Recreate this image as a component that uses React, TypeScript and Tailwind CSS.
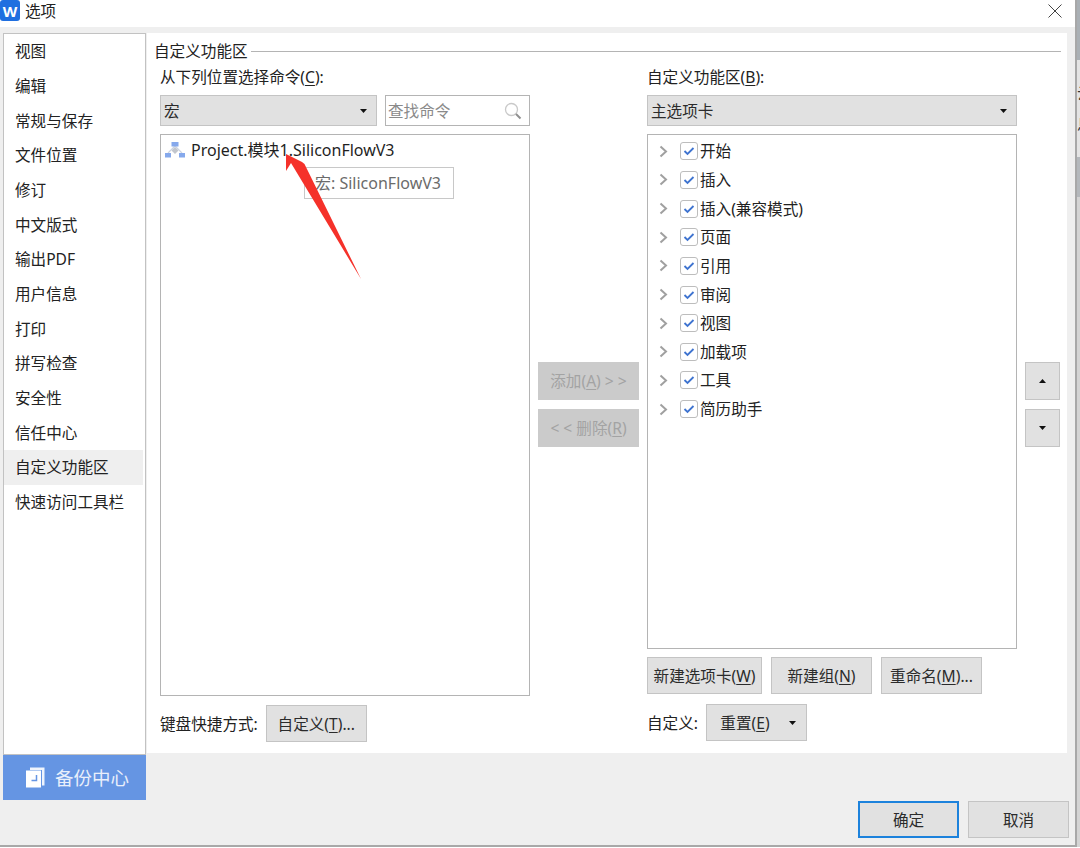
const FONT = "font-['Noto_Sans','Noto_Sans_CJK_SC',sans-serif]";

const navItems = [
  "视图",
  "编辑",
  "常规与保存",
  "文件位置",
  "修订",
  "中文版式",
  "输出PDF",
  "用户信息",
  "打印",
  "拼写检查",
  "安全性",
  "信任中心",
  "自定义功能区",
  "快速访问工具栏",
];

const tabs = ["开始", "插入", "插入(兼容模式)", "页面", "引用", "审阅", "视图", "加载项", "工具", "简历助手"];

// bits of the document behind the dialog, only their tops show under it
const behind = [
  { text: "脚本引", left: "w-[62px]" },
  { text: "引", left: "w-[63px]" },
  { text: "工", left: "w-[57px]" },
  { text: "脚本", left: "w-[530px]" },
  { text: "详", left: "w-[50px]" },
  { text: "标", left: "w-[50px]" },
  { text: "理", left: "w-[40px]" },
  { text: "析", left: "w-[40px]" },
  { text: "册", left: "w-[48px]" },
  { text: "符", left: "w-[68px]" },
  { text: "共", left: "w-[40px]" },
  { text: "符", left: "w-[30px]" },
];

function Caret({ up = false }: { up?: boolean }) {
  return (
    <svg width="7" height="4" viewBox="0 0 7 4" className="shrink-0">
      <path d={up ? "M0 4L3.500 0L7 4z" : "M0 0H7L3.500 4z"} fill="#111" />
    </svg>
  );
}

function Btn({ children, className = "" }: { children: React.ReactNode; className?: string }) {
  return (
    <div className={`flex items-center justify-center bg-[#e1e1e1] text-[#2b2b2b] whitespace-nowrap ${className}`}>
      {children}
    </div>
  );
}

function Key({ k }: { k: string }) {
  return (
    <>
      (<span className="underline underline-offset-2">{k}</span>)
    </>
  );
}

function Combo({ text }: { text: string }) {
  return (
    <div className="flex items-center justify-between h-[31px] bg-[#e1e1e1] border border-[#c4c4c4] pl-[3px] pr-[9px] text-[#2b2b2b]">
      <span>{text}</span>
      <Caret />
    </div>
  );
}

function MacroIcon() {
  return (
    <svg width="20" height="16" viewBox="0 0 20 16" className="shrink-0">
      <path d="M10 4L3 11M10 4L17 11" stroke="#ccd3e0" strokeWidth="1.200" fill="none" />
      <path d="M10 5l3.500 3.500L10 12 6.500 8.500z" fill="#c2c6cd" />
      <rect x="6.500" y="0" width="7" height="4.500" fill="#86a9ec" />
      <rect x="0" y="11" width="6" height="4.500" fill="#86a9ec" />
      <rect x="14" y="11" width="6" height="4.500" fill="#86a9ec" />
    </svg>
  );
}

export default function App() {
  return (
    <div className={`relative flex flex-col w-[1080px] h-[848px] overflow-hidden bg-white ${FONT} text-[15.6px] leading-5 text-[#222]`}>
      <div className="flex shrink-0 h-[847px]">
        {/* Dialog window */}
        <div className="flex flex-col shrink-0 w-[1077px] h-[847px] bg-[#efefef] border-r-2 border-b-2 border-[#a8a8a8]">
          {/* Title bar */}
          <div className="flex items-center h-[27px] bg-white shrink-0">
            <div className="flex items-center justify-center w-[20px] h-[21px] -mt-[6px] rounded-[3px] bg-[#1f6fe0] text-white font-bold text-[15px]">
              W
            </div>
            <span className="ml-[5px] -mt-[6px]">选项</span>
            <svg width="14" height="14" viewBox="0 0 14 14" className="ml-auto mr-[13px] -mt-[5px]">
              <path d="M0.500 0.500L13.500 13.500M13.500 0.500L0.500 13.500" stroke="#444" strokeWidth="1" />
            </svg>
          </div>

          <div className="flex pl-[3px] pt-[6px]">
            {/* Sidebar */}
            <aside className="flex flex-col w-[143px] h-[767px] shrink-0 border-l border-r border-t border-[#c2c2c2]">
              <nav className="flex-1 flex flex-col bg-white">
                {navItems.map((item) => (
                  <div
                    key={item}
                    className={`flex items-center h-[34.67px] pl-[11px] mr-[2px] ${item === "自定义功能区" ? "bg-[#efefef]" : ""}`}
                  >
                    {item}
                  </div>
                ))}
              </nav>
              <div className="flex items-center h-[46px] -mx-px pl-[23px] gap-[10px] bg-[#6595e3] border-t border-[#c2c2c2] text-[#e9effb] text-[18.500px]">
                <svg width="19" height="21" viewBox="0 0 19 21">
                  <path d="M4 0.500H18.500V18.500H16V3H4z" fill="#fff" opacity="0.9" />
                  <path d="M0 3.500H15V20.500H0z" fill="#fff" />
                  <path d="M10.500 8V13.500H5.500" stroke="#6595e3" strokeWidth="1.500" fill="none" />
                </svg>
                备份中心
              </div>
            </aside>

            <div className="flex flex-col w-[922px] ml-[1px]">
              {/* Main panel */}
              <main className="w-[920px] h-[720px] bg-white pt-[8px] shrink-0">
                <div className="flex items-center h-[20px] pl-[7px] pr-[6px]">
                  <span>自定义功能区</span>
                  <div className="flex-1 h-px ml-[3px] bg-[#b4b4b4]" />
                </div>

                <div className="flex mt-[6px] pl-[13px] gap-[8px]">
                  {/* Left column */}
                  <div className="flex flex-col w-[370px]">
                    <div className="h-[20px] mb-[8px]">
                      从下列位置选择命令<Key k="C" />:
                    </div>
                    <div className="flex gap-[8px] mb-[8px]">
                      <div className="w-[217px]">
                        <Combo text="宏" />
                      </div>
                      <div className="flex items-center justify-between flex-1 h-[31px] border border-[#b4b4b4] pl-[2px] pr-[7px] text-[#8a8a8a]">
                        <span>查找命令</span>
                        <svg width="18" height="18" viewBox="0 0 18 18">
                          <circle cx="7.500" cy="7.500" r="6" stroke="#c9c9c9" strokeWidth="1.300" fill="none" />
                          <path d="M12 12L16.500 16.500" stroke="#8f8f8f" strokeWidth="2" />
                        </svg>
                      </div>
                    </div>
                    <div className="relative h-[562px] border border-[#b4b4b4]">
                      <div className="flex items-center gap-[6px] pl-[4px] pt-[5px]">
                        <MacroIcon />
                        <span className="text-[16px] text-[#1f1f1f]">Project.模块1.SiliconFlowV3</span>
                      </div>
                      <div className="absolute left-[143px] top-[32px] flex items-center w-[150px] h-[32px] pl-[10px] bg-white border border-[#c8c8c8] text-[#6b6b6b] text-[16px]">
                        宏: SiliconFlowV3
                      </div>
                    </div>
                    <div className="flex items-center mt-[9px]">
                      <span>键盘快捷方式:</span>
                      <Btn className="w-[101px] h-[37px] ml-[8px] border border-[#c4c4c4]">
                        自定义<Key k="T" />...
                      </Btn>
                    </div>
                  </div>

                  {/* Add / remove */}
                  <div className="flex flex-col w-[101px] pt-[295px] gap-[9px] text-[#a3a3a3]">
                    <div className="flex items-center justify-center h-[38px] bg-[#cbcbcb]">
                      添加<Key k="A" />&nbsp;&gt; &gt;
                    </div>
                    <div className="flex items-center justify-center h-[38px] bg-[#cbcbcb]">
                      &lt; &lt;&nbsp;删除<Key k="R" />
                    </div>
                  </div>

                  {/* Right column */}
                  <div className="flex flex-col w-[370px]">
                    <div className="h-[20px] mb-[8px]">
                      自定义功能区<Key k="B" />:
                    </div>
                    <div className="mb-[8px]">
                      <Combo text="主选项卡" />
                    </div>
                    <div className="flex flex-col h-[515px] border border-[#b4b4b4] pt-[2px]">
                      {tabs.map((tab) => (
                        <div key={tab} className="flex items-center h-[28.650px] pl-[11px]">
                          <svg width="9" height="13" viewBox="0 0 9 13" className="shrink-0">
                            <path d="M1.500 1.500L7 6.500L1.500 11.500" stroke="#a0a0a0" strokeWidth="2" fill="none" />
                          </svg>
                          <div className="flex items-center justify-center w-[18px] h-[18px] ml-[12px] mr-[2px] rounded-[3px] border border-[#bdbdbd]">
                            <svg width="12" height="10" viewBox="0 0 12 10">
                              <path d="M1.500 5L4.500 8L10.500 2" stroke="#3f74d0" strokeWidth="1.800" fill="none" />
                            </svg>
                          </div>
                          <span>{tab}</span>
                        </div>
                      ))}
                    </div>
                    <div className="flex gap-[9px] mt-[8px]">
                      <Btn className="w-[115px] h-[37px] border border-[#c4c4c4]">
                        新建选项卡<Key k="W" />
                      </Btn>
                      <Btn className="w-[101px] h-[37px] border border-[#c4c4c4]">
                        新建组<Key k="N" />
                      </Btn>
                      <Btn className="w-[101px] h-[37px] border border-[#c4c4c4]">
                        重命名<Key k="M" />...
                      </Btn>
                    </div>
                    <div className="flex items-center mt-[10px]">
                      <span>自定义:</span>
                      <Btn className="w-[101px] h-[37px] ml-[8px] gap-[19px] pl-[3px] border border-[#c4c4c4]">
                        <span>
                          重置<Key k="E" />
                        </span>
                        <Caret />
                      </Btn>
                    </div>
                  </div>

                  {/* Move up / down */}
                  <div className="flex flex-col w-[35px] pt-[295px] gap-[9px]">
                    <Btn className="h-[38px] border border-[#c4c4c4]">
                      <Caret up />
                    </Btn>
                    <Btn className="h-[38px] border border-[#c4c4c4]">
                      <Caret />
                    </Btn>
                  </div>
                </div>
              </main>

              {/* Footer buttons */}
              <div className="flex justify-end gap-[9px] mt-[48px]">
                <Btn className="w-[101px] h-[37px] border-2 border-[#1c82dc]">确定</Btn>
                <Btn className="w-[101px] h-[37px] border border-[#c4c4c4]">取消</Btn>
              </div>
            </div>
          </div>
        </div>

        {/* Window behind the dialog, only its edge shows */}
        <div className="flex flex-col flex-1 overflow-hidden text-[16px] text-[#333]">
          <div className="h-[60px] shrink-0 bg-[#aab0b5]" />
          <div className="h-[97px] shrink-0 bg-[#e4e4e4]">
            <div className="h-[20px]" />
            <div className="w-[20px] h-[26px] leading-[26px]">云</div>
            <div className="w-[20px] h-[16px] mt-[10px] leading-[16px]">息</div>
          </div>
          <div className="h-[40px] shrink-0 bg-[#b4b8bc]" />
          <div className="flex-1 bg-[#d4d4d4]" />
        </div>
      </div>

      {/* Document text showing under the dialog */}
      <div className="flex h-[1px] overflow-hidden text-[14px] leading-[16px] text-[#555]">
        {behind.map((b, i) => (
          <span key={i} className={`shrink-0 ${b.left}`}>
            {b.text}
          </span>
        ))}
      </div>

      {/* Annotation arrow */}
      <svg width="1080" height="848" viewBox="0 0 1080 848" className="absolute left-0 top-0 pointer-events-none">
        <path d="M286 154L302 162L304.500 164L361 279L291 163L286 171z" fill="#f5312a" />
      </svg>
    </div>
  );
}
